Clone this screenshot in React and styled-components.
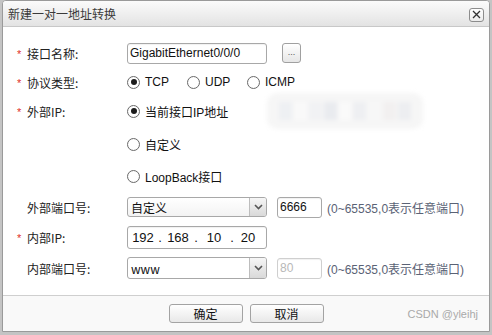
import styled, { createGlobalStyle } from "styled-components";

const GlobalStyle = createGlobalStyle`
  html, body {
    margin: 0;
    padding: 0;
    background: #c4c4c4;
  }
  * {
    box-sizing: border-box;
  }
`;

const Page = styled.div`
  width: 492px;
  height: 335px;
  padding: 0 2px 3px 2px;
  font-family: "Liberation Sans", "Noto Sans CJK SC", sans-serif;
  font-size: 12px;
  color: #222;
`;

const Dialog = styled.div`
  position: relative;
  width: 488px;
  height: 332px;
  border: 1px solid #9a9a9a;
  border-radius: 4px 4px 0 0;
  background: #fff;
  display: flex;
  flex-direction: column;
  overflow: hidden;
`;

const TitleBar = styled.div`
  height: 26px;
  flex: none;
  display: flex;
  align-items: center;
  justify-content: space-between;
  padding: 0 5px 0 5px;
  background: linear-gradient(#fbfbfb, #e3e3e3);
  border-bottom: 1px solid #c8c8c8;
`;

const Title = styled.span`
  font-family: "Noto Sans CJK SC", sans-serif;
  font-size: 12px;
  color: #3a3a3a;
`;

const CloseBtn = styled.div`
  width: 15px;
  height: 14px;
  border: 1px solid #8c8c8c;
  border-radius: 3px;
  background: linear-gradient(#ffffff, #ececec);
  display: flex;
  align-items: center;
  justify-content: center;
  margin-top: 2px;
`;

const Body = styled.div`
  flex: 1;
  padding: 14px 0 0 14px;
  display: flex;
  flex-direction: column;
`;

const Row = styled.div`
  height: 24px;
  margin-top: ${(p) => p.$mt || 0}px;
  display: flex;
  align-items: center;
`;

const Mark = styled.span`
  width: 10px;
  flex: none;
  color: #e0302a;
  font-size: 11px;
  padding-top: 2px;
`;

const Label = styled.span`
  width: 100px;
  flex: none;
  font-family: "Noto Sans CJK SC", sans-serif;
  color: #222;
`;

const TextInput = styled.div`
  width: ${(p) => p.$w}px;
  height: ${(p) => p.$h || 21}px;
  border: 1px solid ${(p) => (p.$disabled ? "#cfcfcf" : "#a8a8a8")};
  border-radius: 3px;
  box-shadow: inset 0 1px 1px rgba(0, 0, 0, 0.06);
  background: #fff;
  display: flex;
  align-items: center;
  padding-left: 2px;
  color: ${(p) => (p.$disabled ? "#b8b8b8" : "#111")};
  margin-left: ${(p) => p.$ml || 0}px;
  flex: none;
`;

const SmallBtn = styled.div`
  width: 19px;
  height: 20px;
  margin-left: 15px;
  border: 1px solid #a0a0a0;
  border-radius: 3px;
  background: linear-gradient(#ffffff, #e6e6e6);
  display: flex;
  align-items: center;
  justify-content: center;
  font-size: 9px;
  color: #555;
  padding-bottom: 3px;
`;

const Option = styled.div`
  width: ${(p) => p.$w}px;
  flex: none;
  display: flex;
  align-items: center;
  gap: 5px;
  font-family: "Liberation Sans", "Noto Sans CJK SC", sans-serif;
  color: #111;
`;

const Radio = styled.span`
  width: 13px;
  height: 13px;
  border-radius: 50%;
  border: 1px solid #6a6a6a;
  background: radial-gradient(circle, #ffffff 55%, #ececec);
  display: flex;
  align-items: center;
  justify-content: center;
  flex: none;

  &::after {
    content: "";
    width: 6px;
    height: 6px;
    border-radius: 50%;
    background: #1c1c1c;
    display: ${(p) => (p.$on ? "block" : "none")};
  }
`;

const Blur = styled.div`
  width: 156px;
  height: 36px;
  display: flex;
  filter: blur(2px);
  background: #f6f6f6;
  border-radius: 10px;
  align-items: center;
  padding: 0 12px;
  gap: 2px;
`;

const Pixel = styled.span`
  width: 16px;
  height: 18px;
  background: ${(p) => p.$c};
`;

const Select = styled.div`
  width: 140px;
  height: ${(p) => p.$h || 21}px;
  border: 1px solid #a8a8a8;
  border-radius: 3px;
  background: ${(p) => (p.$plain ? "#fff" : "linear-gradient(#ffffff, #f3f3f3)")};
  display: flex;
  flex: none;
  overflow: hidden;
`;

const SelectText = styled.span`
  flex: 1;
  display: flex;
  align-items: center;
  padding-left: 3px;
  font-family: "Noto Sans CJK SC", "Liberation Sans", sans-serif;
  color: #111;
`;

const Arrow = styled.span`
  width: 17px;
  flex: none;
  border-left: 1px solid #bdbdbd;
  background: linear-gradient(#f6f6f6, #d9d9d9);
  display: flex;
  align-items: center;
  justify-content: center;
`;

const Hint = styled.span`
  margin-left: 5px;
  font-family: "Liberation Sans", "Noto Sans CJK SC", sans-serif;
  color: #5a6275;
  font-size: 12px;
`;

const IpSeg = styled.span`
  width: ${(p) => p.$w}px;
  text-align: center;
  font-size: 13px;
  color: #111;
`;

const Footer = styled.div`
  height: 36px;
  flex: none;
  border-top: 1px solid #cfcfcf;
  background: #f9f9f9;
  display: flex;
  justify-content: center;
  align-items: flex-start;
  padding-top: 8px;
  gap: 7px;
`;

const Button = styled.div`
  width: 74px;
  height: 19px;
  border: 1px solid #a3a3a3;
  border-radius: 3px;
  background: linear-gradient(#ffffff, #e8e8e8);
  display: flex;
  align-items: center;
  justify-content: center;
  font-family: "Noto Sans CJK SC", sans-serif;
  font-size: 12px;
  color: #111;
`;

const Watermark = styled.span`
  position: absolute;
  right: 11px;
  bottom: 11px;
  font-family: "Liberation Sans", sans-serif;
  font-size: 11px;
  color: #a9a9a9;
`;

const Chevron = () => (
  <svg width="9" height="6" viewBox="0 0 9 6">
    <path d="M1 1 L4.5 4.5 L8 1" fill="none" stroke="#555" strokeWidth="1.6" />
  </svg>
);

const CloseIcon = () => (
  <svg width="9" height="9" viewBox="0 0 9 9">
    <path d="M1 1 L8 8 M8 1 L1 8" stroke="#333" strokeWidth="1.3" />
  </svg>
);

const blurColors = ["#eef0f3", "#f9f9f9", "#f1f2f4", "#e9ebef", "#fafafa", "#eeeff2", "#f7f7f7", "#f2f0f0", "#edeef1"];

export default function App() {
  return (
    <Page>
      <GlobalStyle />
      <Dialog>
        <TitleBar>
          <Title>新建一对一地址转换</Title>
          <CloseBtn>
            <CloseIcon />
          </CloseBtn>
        </TitleBar>
        <Body>
          <Row>
            <Mark>*</Mark>
            <Label>接口名称:</Label>
            <TextInput $w={140}>GigabitEthernet0/0/0</TextInput>
            <SmallBtn>...</SmallBtn>
          </Row>
          <Row $mt={5}>
            <Mark>*</Mark>
            <Label>协议类型:</Label>
            <Option $w={60}>
              <Radio $on />
              TCP
            </Option>
            <Option $w={60}>
              <Radio />
              UDP
            </Option>
            <Option $w={60}>
              <Radio />
              ICMP
            </Option>
          </Row>
          <Row $mt={5}>
            <Mark>*</Mark>
            <Label>外部IP:</Label>
            <Option $w={140}>
              <Radio $on />
              当前接口IP地址
            </Option>
            <Blur>
              {blurColors.map((c, i) => (
                <Pixel key={i} $c={c} />
              ))}
            </Blur>
          </Row>
          <Row $mt={9}>
            <Mark />
            <Label />
            <Option $w={140}>
              <Radio />
              自定义
            </Option>
          </Row>
          <Row $mt={8}>
            <Mark />
            <Label />
            <Option $w={140}>
              <Radio />
              LoopBack接口
            </Option>
          </Row>
          <Row $mt={7}>
            <Mark />
            <Label>外部端口号:</Label>
            <Select $h={20}>
              <SelectText>自定义</SelectText>
              <Arrow>
                <Chevron />
              </Arrow>
            </Select>
            <TextInput $w={45} $ml={10}>6666</TextInput>
            <Hint>(0~65535,0表示任意端口)</Hint>
          </Row>
          <Row $mt={6}>
            <Mark>*</Mark>
            <Label>内部IP:</Label>
            <TextInput $w={140} $h={23}>
              <IpSeg $w={26}>192</IpSeg>
              <IpSeg $w={8}>.</IpSeg>
              <IpSeg $w={28}>168</IpSeg>
              <IpSeg $w={8}>.</IpSeg>
              <IpSeg $w={28}>10</IpSeg>
              <IpSeg $w={8}>.</IpSeg>
              <IpSeg $w={24}>20</IpSeg>
            </TextInput>
          </Row>
          <Row $mt={7}>
            <Mark />
            <Label>内部端口号:</Label>
            <Select $plain $h={22}>
              <SelectText>www</SelectText>
              <Arrow>
                <Chevron />
              </Arrow>
            </Select>
            <TextInput $w={45} $ml={10} $disabled>80</TextInput>
            <Hint>(0~65535,0表示任意端口)</Hint>
          </Row>
        </Body>
        <Footer>
          <Button>确定</Button>
          <Button>取消</Button>
        </Footer>
        <Watermark>CSDN @yleihj</Watermark>
      </Dialog>
    </Page>
  );
}
